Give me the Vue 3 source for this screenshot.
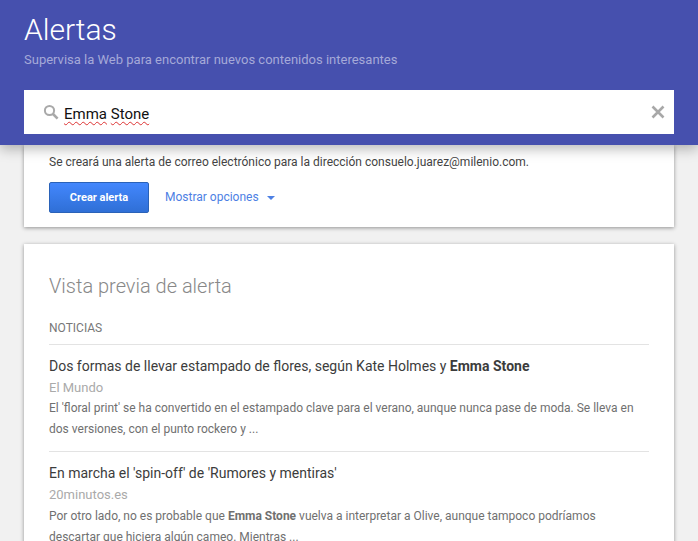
<template>
  <div class="page">
    <header class="head">
      <h1 class="head__title">Alertas</h1>
      <p class="head__sub">Supervisa la Web para encontrar nuevos contenidos interesantes</p>
      <div class="search">
        <svg class="search__icon" width="16" height="16" viewBox="0 0 16 16">
          <circle cx="6.5" cy="6.5" r="4.6" fill="none" stroke="#a9a9a9" stroke-width="2" />
          <path d="M10 10l4.6 4.6" stroke="#a9a9a9" stroke-width="2.6" />
        </svg>
        <div class="search__text"><span class="typo">Emma</span> <span class="typo">Stone</span></div>
        <svg class="search__clear" width="14" height="14" viewBox="0 0 14 14">
          <path d="M1.5 1.5l11 11M12.5 1.5l-11 11" stroke="#a8a8a8" stroke-width="2.6" />
        </svg>
      </div>
    </header>

    <main class="main">
      <section class="card card--create">
        <p class="create__note">Se creará una alerta de correo electrónico para la dirección consuelo.juarez@milenio.com.</p>
        <div class="create__actions">
          <button class="btn">Crear alerta</button>
          <a class="opts">Mostrar opciones <span class="opts__arrow"></span></a>
        </div>
      </section>

      <section class="card card--preview">
        <h2 class="preview__title">Vista previa de alerta</h2>
        <div class="preview__label">NOTICIAS</div>
        <article v-for="item in news" :key="item.source" class="news">
          <h3 class="news__title">{{ item.title }} <b v-if="item.titleBold">{{ item.titleBold }}</b></h3>
          <div class="news__source">{{ item.source }}</div>
          <p class="news__text">
            {{ item.before }} <b v-if="item.bold">{{ item.bold }}</b> {{ item.after }}
          </p>
        </article>
      </section>
    </main>
  </div>
</template>

<script setup>
const news = [
  {
    title: 'Dos formas de llevar estampado de flores, según Kate Holmes y',
    titleBold: 'Emma Stone',
    source: 'El Mundo',
    before: "El 'floral print' se ha convertido en el estampado clave para el verano, aunque nunca pase de moda. Se lleva en dos versiones, con el punto rockero y ...",
    bold: '',
    after: ''
  },
  {
    title: "En marcha el 'spin-off' de 'Rumores y mentiras'",
    titleBold: '',
    source: '20minutos.es',
    before: 'Por otro lado, no es probable que',
    bold: 'Emma Stone',
    after: 'vuelva a interpretar a Olive, aunque tampoco podríamos descartar que hiciera algún cameo. Mientras ...'
  }
]
</script>

<style>
html, body {
  margin: 0;
  background: #f1f1f1;
  overflow: hidden;
}
</style>

<style scoped>
.page {
  height: 541px;
  overflow: hidden;
  background: #f1f1f1;
  font-family: Roboto, "Liberation Sans", sans-serif;
}

.head {
  position: relative;
  z-index: 2;
  height: 145px;
  box-sizing: border-box;
  padding: 11px 24px 0;
  background: #4650ae;
  box-shadow: 0 4px 12px rgba(0, 0, 0, 0.28);
}

.head__title {
  margin: 0;
  font-size: 30px;
  font-weight: 300;
  line-height: 38px;
  color: #fff;
}

.head__sub {
  margin: 2px 0 0;
  font-size: 13px;
  line-height: 18px;
  color: #a5a9d8;
}

.search {
  display: flex;
  align-items: center;
  height: 44px;
  margin-top: 21px;
  padding: 0 9px 0 19px;
  background: #fff;
}

.search__icon {
  flex: none;
  margin-right: 5px;
}

.search__text {
  flex: 1;
  padding-top: 4px;
  font-size: 15px;
  color: #111;
}

.typo {
  text-decoration: underline wavy #d33;
  text-decoration-thickness: 1px;
  text-underline-offset: 2px;
}

.main {
  padding: 0 24px;
}

.card {
  box-sizing: border-box;
  background: #fff;
  box-shadow: 0 1px 4px rgba(0, 0, 0, 0.4);
  padding: 0 25px;
}

.card--create {
  height: 82px;
  padding-top: 8px;
}

.create__note {
  margin: 0;
  font-size: 12px;
  line-height: 17px;
  color: #444;
  padding-top: 1px;
}

.create__actions {
  display: flex;
  align-items: center;
  margin-top: 11px;
}

.btn {
  width: 100px;
  height: 31px;
  padding: 0;
  border: 1px solid #2a62b8;
  border-radius: 2px;
  background: linear-gradient(#4387fd, #2f6fd6);
  color: #fff;
  font-family: inherit;
  font-size: 11px;
  font-weight: 700;
}

.opts {
  margin-left: 16px;
  margin-top: -1px;
  font-size: 12px;
  color: #4d80e4;
}

.opts__arrow {
  display: inline-block;
  margin-left: 5px;
  vertical-align: middle;
  border-left: 4px solid transparent;
  border-right: 4px solid transparent;
  border-top: 4px solid #4d80e4;
}

.card--preview {
  margin-top: 17px;
  padding-top: 29px;
  height: 320px;
}

.preview__title {
  margin: 0;
  font-size: 20px;
  font-weight: 300;
  line-height: 26px;
  color: #888;
}

.preview__label {
  margin-top: 21px;
  padding-bottom: 8px;
  border-bottom: 1px solid #e3e3e3;
  font-size: 12px;
  line-height: 16px;
  color: #777;
}

.news {
  padding: 11px 0 11px;
  border-bottom: 1px solid #e3e3e3;
}

.news__title {
  margin: 0;
  font-size: 14px;
  font-weight: 400;
  line-height: 20px;
  color: #3c3c3c;
}

.news__title b {
  font-weight: 700;
}

.news__source {
  margin-top: 3px;
  font-size: 13px;
  line-height: 18px;
  color: #aaa;
}

.news__text {
  margin: 1px 0 0;
  font-size: 12px;
  line-height: 21px;
  color: #707070;
}

.news + .news .news__text {
  margin-top: 2px;
}
</style>
